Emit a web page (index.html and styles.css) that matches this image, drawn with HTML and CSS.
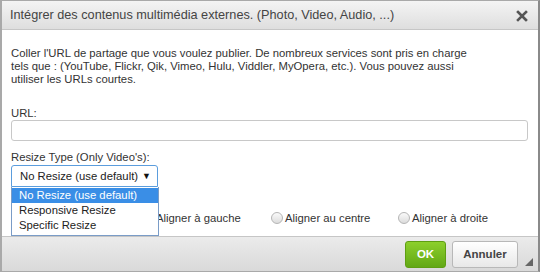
FILE: index.html
```html
<!DOCTYPE html>
<html lang="fr">
<head>
  <meta charset="UTF-8">
  <title>Intégrer des contenus multimédia externes</title>
  <link rel="stylesheet" href="styles.css">
</head>
<body>

<div class="dialog">
  <div class="titlebar">
    <span class="title">Intégrer des contenus multimédia externes. (Photo, Video, Audio, ...)</span>
    <span class="close">
      <svg width="12" height="12" viewBox="0 0 12 12"><path d="M2 2 L10 10 M10 2 L2 10" stroke="#555" stroke-width="2.6" stroke-linecap="square"/></svg>
    </span>
  </div>

  <div class="content">
    <p class="intro">Coller l'URL de partage que vous voulez publier. De nombreux services sont pris en charge tels que : (YouTube, Flickr, Qik, Vimeo, Hulu, Viddler, MyOpera, etc.). Vous pouvez aussi utiliser les URLs courtes.</p>

    <label class="field-label">URL:</label>
    <div class="text-input"></div>

    <label class="field-label">Resize Type (Only Video's):</label>
    <div class="select-wrap">
      <div class="select">
        <span>No Resize (use default)</span>
        <span class="arrow">&#9660;</span>
      </div>
      <ul class="options">
        <li class="active">No Resize (use default)</li>
        <li>Responsive Resize</li>
        <li>Specific Resize</li>
      </ul>
    </div>

    <div class="align-row">
      <label class="radio"><span class="dot"></span>Aligner à gauche</label>
      <label class="radio"><span class="dot"></span>Aligner au centre</label>
      <label class="radio"><span class="dot"></span>Aligner à droite</label>
    </div>
  </div>

  <div class="footer">
    <button class="btn btn-ok">OK</button>
    <button class="btn btn-cancel">Annuler</button>
    <span class="grip"></span>
  </div>
</div>

</body>
</html>
```

FILE: styles.css
```css
html, body {
  margin: 0;
  padding: 0;
}

body {
  width: 540px;
  height: 272px;
  font-family: "Liberation Sans", Arial, sans-serif;
  font-size: 11.3px;
  color: #333;
  background: #fff;
}

.dialog {
  box-sizing: border-box;
  width: 540px;
  height: 272px;
  border: 1px solid #a9a9a9;
  border-left-width: 2px;
  border-right: 2px solid #8a8a8a;
  display: flex;
  flex-direction: column;
}

.titlebar {
  height: 28px;
  flex: none;
  display: flex;
  align-items: center;
  justify-content: space-between;
  padding: 0 10px 0 8px;
  background: linear-gradient(#f4f4f4, #dedede);
  border-bottom: 1px solid #c6c6c6;
}

.title {
  font-size: 12.7px;
  color: #444;
}

.close {
  display: flex;
  margin-top: 1px;
}

.content {
  flex: 1;
  padding: 17px 10px 0 9px;
  position: relative;
}

.intro {
  max-width: 462px;
  margin: 0 0 20px 0;
  line-height: 13px;
  color: #333;
}

.field-label {
  display: block;
  line-height: 14px;
  color: #333;
}

.text-input {
  box-sizing: border-box;
  height: 21px;
  margin: 0 0 9px 0;
  border: 1px solid #c8c8c8;
  border-radius: 3px;
  background: #fff;
}

.select-wrap {
  position: relative;
  width: 147px;
  margin-top: 1px;
}

.select {
  box-sizing: border-box;
  height: 22px;
  display: flex;
  align-items: center;
  justify-content: space-between;
  padding: 0 6px 0 8px;
  border: 1px solid #5b9ddd;
  border-radius: 3px 3px 0 0;
  color: #222;
}

.arrow {
  font-size: 9px;
  color: #111;
}

.options {
  position: absolute;
  top: 22px;
  left: 0;
  width: 148px;
  box-sizing: border-box;
  margin: 0;
  padding: 1px 0 2px 0;
  list-style: none;
  background: #fff;
  border: 1px solid #7a9cc7;
  border-top: none;
  z-index: 2;
}

.options li {
  height: 15px;
  line-height: 15px;
  padding-left: 7px;
  color: #222;
}

.options li.active {
  background: #3a8ee6;
  color: #fff;
}

.align-row {
  display: flex;
  margin: 25px 0 0 131px;
}

.radio {
  display: flex;
  align-items: center;
  color: #333;
}

.radio:nth-child(1) { width: 129px; }
.radio:nth-child(2) { width: 127px; }

.dot {
  box-sizing: border-box;
  width: 12px;
  height: 12px;
  border-radius: 50%;
  border: 1px solid #b5b5b5;
  background: linear-gradient(#fafafa, #dcdcdc);
  margin-right: 2px;
}

.footer {
  height: 34px;
  flex: none;
  display: flex;
  align-items: center;
  justify-content: flex-end;
  gap: 6px;
  padding-right: 20px;
  background: linear-gradient(#ebebeb, #d9d9d9);
  border-top: 1px solid #c6c6c6;
  position: relative;
}

.btn {
  height: 27px;
  border-radius: 3px;
  font-family: "Liberation Sans", Arial, sans-serif;
  font-size: 11.5px;
  font-weight: bold;
  cursor: pointer;
}

.btn-ok {
  width: 41px;
  color: #fff;
  border: 1px solid #5e9e12;
  background: linear-gradient(#8ccf2c, #62a815);
}

.btn-cancel {
  width: 66px;
  color: #444;
  border: 1px solid #b8b8b8;
  background: linear-gradient(#ffffff, #e8e8e8);
}

.grip {
  position: absolute;
  right: 5px;
  bottom: 5px;
  width: 0;
  height: 0;
  border-left: 8px solid transparent;
  border-bottom: 8px solid #666;
}
```
